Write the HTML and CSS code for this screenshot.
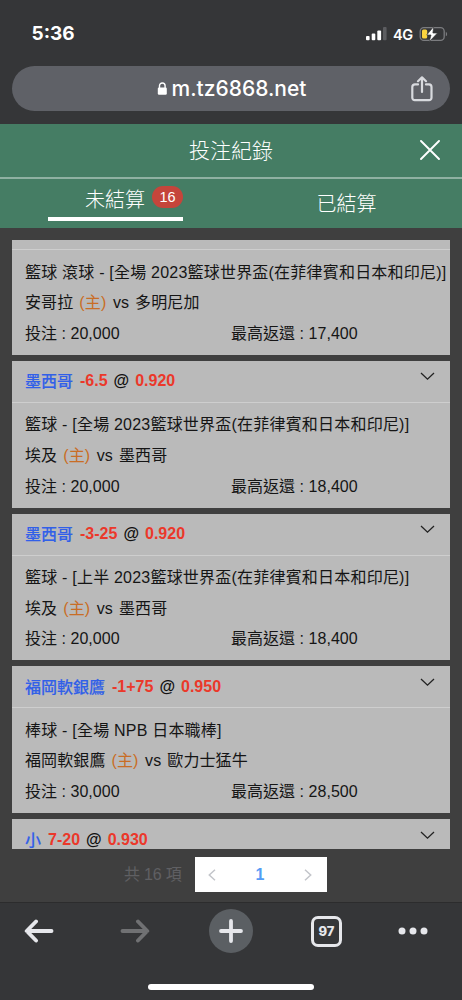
FILE: index.html
```html
<!DOCTYPE html>
<html lang="zh-Hant">
<head>
<meta charset="utf-8">
<meta name="viewport" content="width=device-width, initial-scale=1">
<title>投注紀錄</title>
<link rel="stylesheet" href="styles.css">
</head>
<body>
<div class="phone">
  <div class="status">
    <span class="time">5:36</span>
    <div class="indicators">
      <svg class="signal" width="21" height="14" viewBox="0 0 21 14"><g fill="#fff"><rect x="0" y="9" width="3.6" height="4.3" rx="1"/><rect x="5.7" y="6.6" width="3.6" height="6.7" rx="1"/><rect x="11.3" y="3.6" width="3.8" height="9.7" rx="1"/><rect x="17" y="0" width="3.6" height="13.3" rx="1" fill="#5c5d60"/></g></svg>
      <span class="network">4G</span>
      <svg class="battery" width="30" height="16" viewBox="0 0 30 16"><rect x="1.2" y="1.6" width="24" height="12.8" rx="3.6" fill="none" stroke="#7b7c7f" stroke-width="1.3"/><path d="M26.8 5.7c1.8.8 1.8 3.8 0 4.6z" fill="#7b7c7f"/><rect x="3" y="3.4" width="5.2" height="9.2" rx="1.5" fill="#fad33e"/><path d="M14.7 .6 7.7 9h4.3l-1.8 6.8 8.300-8.800h-4.600z" fill="#fff" stroke="#353638" stroke-width=".7"/></svg>
    </div>
  </div>
  <div class="address">
    <span></span>
    <div class="url"><svg width="11" height="14" viewBox="0 0 11 14"><path d="M2.5 6V3.8a2.8 2.8 0 0 1 5.6 0V6" fill="none" stroke="#fff" stroke-width="1.4"/><rect x=".8" y="5.6" width="9" height="7.2" rx="1.2" fill="#fff"/></svg><span>m.tz6868.net</span></div>
    <svg class="share" width="22" height="26" viewBox="0 0 22 26"><path d="M7 8.4H4A2.7 2.7 0 0 0 1.3 11v11A2.4 2.4 0 0 0 4 24.200h14a2.400 2.400 0 0 0 2.500-2.400V11A2.600 2.600 0 0 0 18 8.400h-3M11 16V2M7 5.200l4-3.900 4 3.900" fill="none" stroke="#d8dade" stroke-width="2.200" stroke-linecap="round" stroke-linejoin="round"/></svg>
  </div>

  <header class="titlebar">
    <h1>投注紀錄</h1>
    <svg width="20" height="20" viewBox="0 0 20 20"><path d="M1 1l18 18M19 1 1 19" stroke="#fff" stroke-width="1.900" stroke-linecap="round"/></svg>
  </header>
  <nav class="tabs">
    <div class="tab"><div class="active"><span>未結算</span><b>16</b></div></div>
    <div class="tab idle">已結算</div>
  </nav>

  <main>
    <div class="list">
      <article class="card">
        <div class="head clipped"></div>
        <div class="body">
          <p class="wide">籃球 滾球 - [全場 2023籃球世界盃(在菲律賓和日本和印尼)]</p>
          <p>安哥拉 <i>(主)</i> <span class="vs">vs</span> 多明尼加</p>
          <p class="money"><span>投注 : 20,000</span><span>最高返還 : 17,400</span></p>
        </div>
      </article>
      <article class="card">
        <div class="head"><span class="team">墨西哥</span><span class="num">-6.5</span><span class="at">@</span><span class="num">0.920</span><svg width="15" height="9" viewBox="0 0 15 9"><path d="M1 1l6.500 6.200L14 1" fill="none" stroke="#222" stroke-width="1.300"/></svg></div>
        <div class="body">
          <p class="wide">籃球 - [全場 2023籃球世界盃(在菲律賓和日本和印尼)]</p>
          <p>埃及 <i>(主)</i> <span class="vs">vs</span> 墨西哥</p>
          <p class="money"><span>投注 : 20,000</span><span>最高返還 : 18,400</span></p>
        </div>
      </article>
      <article class="card">
        <div class="head"><span class="team">墨西哥</span><span class="num">-3-25</span><span class="at">@</span><span class="num">0.920</span><svg width="15" height="9" viewBox="0 0 15 9"><path d="M1 1l6.500 6.200L14 1" fill="none" stroke="#222" stroke-width="1.300"/></svg></div>
        <div class="body">
          <p class="wide">籃球 - [上半 2023籃球世界盃(在菲律賓和日本和印尼)]</p>
          <p>埃及 <i>(主)</i> <span class="vs">vs</span> 墨西哥</p>
          <p class="money"><span>投注 : 20,000</span><span>最高返還 : 18,400</span></p>
        </div>
      </article>
      <article class="card">
        <div class="head"><span class="team">福岡軟銀鷹</span><span class="num">-1+75</span><span class="at">@</span><span class="num">0.950</span><svg width="15" height="9" viewBox="0 0 15 9"><path d="M1 1l6.500 6.200L14 1" fill="none" stroke="#222" stroke-width="1.300"/></svg></div>
        <div class="body">
          <p class="wide">棒球 - [全場 NPB 日本職棒]</p>
          <p>福岡軟銀鷹 <i>(主)</i> <span class="vs">vs</span> 歐力士猛牛</p>
          <p class="money"><span>投注 : 30,000</span><span>最高返還 : 28,500</span></p>
        </div>
      </article>
      <article class="card">
        <div class="head"><span class="team">小</span><span class="num">7-20</span><span class="at">@</span><span class="num">0.930</span><svg width="15" height="9" viewBox="0 0 15 9"><path d="M1 1l6.500 6.200L14 1" fill="none" stroke="#222" stroke-width="1.300"/></svg></div>
      </article>
    </div>
    <div class="pager">
      <span class="total">共 16 項</span>
      <div class="pages">
        <svg width="8" height="12" viewBox="0 0 8 12"><path d="M7 .8 1.300 6 7 11.200" fill="none" stroke="#c3c5ca" stroke-width="1.500"/></svg>
        <b>1</b>
        <svg width="8" height="12" viewBox="0 0 8 12"><path d="M1 .8 6.700 6 1 11.200" fill="none" stroke="#c3c5ca" stroke-width="1.500"/></svg>
      </div>
    </div>
  </main>

  <footer>
    <div class="tools">
      <svg width="30" height="26" viewBox="0 0 30 26"><path d="M27.500 13H3M12 3.500 2.700 13l9.300 9.500" fill="none" stroke="#e6e7eb" stroke-width="3.900" stroke-linecap="round" stroke-linejoin="round"/></svg>
      <svg width="30" height="26" viewBox="0 0 30 26"><path d="M2.500 13H27M18 3.500l9.300 9.500-9.300 9.500" fill="none" stroke="#707173" stroke-width="3.900" stroke-linecap="round" stroke-linejoin="round"/></svg>
      <div class="plus"><svg width="26" height="26" viewBox="0 0 26 26"><path d="M13 3v20M3 13h20" stroke="#e6e7eb" stroke-width="3.800" stroke-linecap="round"/></svg></div>
      <div class="count">97</div>
      <svg width="30" height="8" viewBox="0 0 30 8"><g fill="#e6e7eb"><circle cx="4" cy="4" r="3.500"/><circle cx="15" cy="4" r="3.500"/><circle cx="26" cy="4" r="3.500"/></g></svg>
    </div>
    <div class="home"></div>
  </footer>
</div>
</body>
</html>
```
FILE: styles.css
```css
* { box-sizing: border-box; }
body {
  margin: 0;
  background: #353638;
  font-family: "Liberation Sans", "Noto Sans CJK TC", sans-serif;
  font-size: 16px;
  color: #151515;
}
h1, p { margin: 0; }
svg { display: block; flex: none; }
.phone { width: 462px; height: 1000px; display: flex; flex-direction: column; overflow: hidden; }

.status { height: 66px; display: flex; justify-content: space-between; padding: 0 13px 0 31.500px; color: #fff; font-family: Inter, sans-serif; }
.time { font-size: 19px; font-weight: 700; line-height: 22px; padding-top: 23px; }
.indicators { display: flex; align-items: center; height: 16px; margin-top: 26px; }
.network { font-size: 14.500px; font-weight: 600; margin: 0 6px 0 6px; letter-spacing: -.2px; }

.address { height: 45px; margin: 0 12px 13px; padding: 0 17px; border-radius: 23px; background: #5f6167; display: grid; grid-template-columns: 1fr auto 1fr; align-items: center; }
.url { display: flex; align-items: center; gap: 4px; color: #fff; font: 500 21px/24px Inter, sans-serif; margin-right: -1px; }
.share { justify-self: end; }

.titlebar { height: 55px; background: #457d64; border-bottom: 2px solid #8fb1a2; display: grid; place-items: center; position: relative; }
.titlebar h1 { color: #fff; font-size: 21px; font-weight: 300; line-height: 30px; }
.titlebar svg { position: absolute; right: 22px; top: 16px; }
.tabs { height: 49px; background: #457d64; display: grid; grid-template-columns: 1fr 1fr; color: #fff; font-size: 20px; font-weight: 300; line-height: 28px; }
.tab { display: flex; justify-content: center; }
.active { width: 135px; height: 42px; border-bottom: 4px solid #fff; display: flex; align-items: flex-start; justify-content: flex-end; padding-top: 7px; gap: 7px; }
.active b { width: 31px; height: 22px; border-radius: 11px; background: #c5453b; text-align: center; font-size: 14.500px; line-height: 22px; font-weight: 400; }
.idle { padding-top: 11px; }

main { height: 675px; background: #3f3f3f; padding: 12px 12px 0; border-bottom: 1px solid #2c2c2d; }
.list { height: 609px; overflow: hidden; display: flex; flex-direction: column; gap: 6px; }
.card { background: #bababa; flex: none; }
.head { height: 42px; border-bottom: 1px solid #cecece; display: flex; align-items: center; padding: 0 15px 0 13px; font-weight: 700; }
.head.clipped { height: 10.200px; }
.head svg { margin: -9px 0 0 auto; }
.team { color: #3160e8; margin: -2px 7px 0 0; font-weight: 500; -webkit-text-stroke: .15px #3160e8; }
.num { color: #eb382a; }
.at { margin: 0 6px; color: #111; }
.body { padding: 7.500px 0 5.300px 13px; }
.body p { height: 30.650px; line-height: 30.650px; white-space: pre; letter-spacing: .1px; }
.body .wide { letter-spacing: .21px; }
.body i { font-style: normal; color: #c96d25; margin: 0 1.500px; }
.vs { margin: 0 1.500px 0 .5px; }
.money { display: grid; grid-template-columns: 206px 1fr; }
.body .money { letter-spacing: .03px; }

.pager { margin-top: 8px; display: flex; align-items: center; padding-left: 112px; }
.total { color: #606063; width: 71px; margin-top: -3px; letter-spacing: -.2px; }
.pages { width: 132px; height: 35px; background: #fff; display: flex; align-items: center; justify-content: space-between; padding: 0 15px 0 13px; }
.pages b { color: #559cf5; }

footer { flex: 1; display: flex; flex-direction: column; align-items: center; }
.tools { width: 462px; height: 56px; display: grid; grid-template-columns: 96px 88px 102px 88px 1fr; align-items: center; padding-left: 24px; }
.plus { width: 44px; height: 44px; border-radius: 50%; background: #5b5f63; display: grid; place-items: center; margin-left: 1px; }
.count { width: 31px; height: 31px; border: 3px solid #e6e7eb; border-radius: 7px; color: #e6e7eb; display: grid; place-items: center; font: 800 13px Inter, sans-serif; margin-left: 1px; }
.home { width: 166px; height: 6px; border-radius: 3px; background: #fff; margin-top: 25px; }
```
